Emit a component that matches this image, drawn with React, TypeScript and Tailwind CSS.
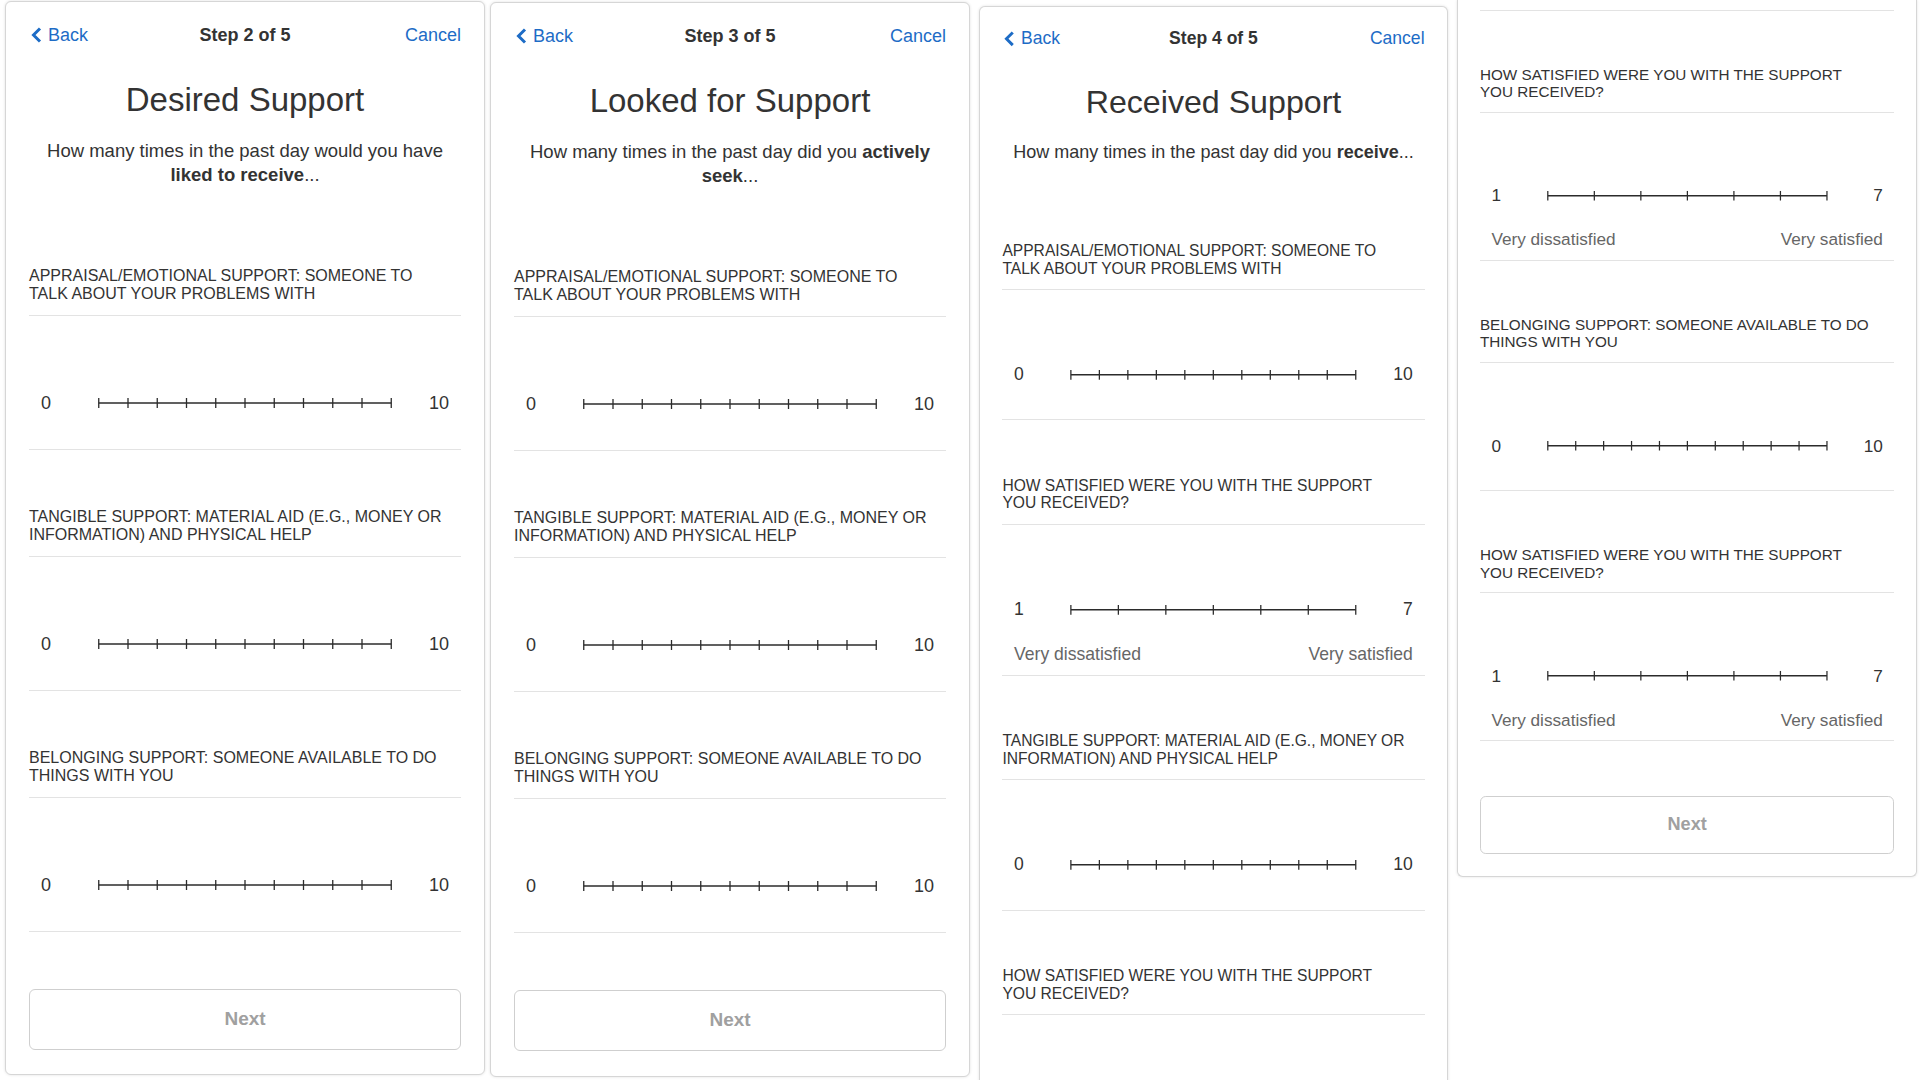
import React from "react";

const BLUE = "text-[#1d6cc6]";

function Chevron() {
  return (
    <svg width="11" height="16" viewBox="0 0 11 16" className="shrink-0 ml-[2px]">
      <polyline points="9,1.5 2.5,8 9,14.5" fill="none" stroke="#1d6cc6" strokeWidth="3" />
    </svg>
  );
}

function Ticks({ n }: { n: number }) {
  const w = 294;
  const xs = Array.from({ length: n }, (_, i) => 0.75 + (i * (w - 1.5)) / (n - 1));
  return (
    <svg width={w} height="12" viewBox={`0 0 ${w} 12`} className="shrink-0">
      <line x1="0.75" y1="6" x2={w - 0.75} y2="6" stroke="#2b2b2b" strokeWidth="1.5" />
      {xs.map((x, i) => (
        <line key={i} x1={x} y1="1" x2={x} y2="11" stroke="#2b2b2b" strokeWidth="1.3" />
      ))}
    </svg>
  );
}

function Header({ step }: { step: number }) {
  return (
    <div className="pt-[21px] grid grid-cols-3 items-center h-[45px] text-[18px] leading-[24px]">
      <div className={`flex items-center gap-[6px] ${BLUE}`}>
        <Chevron />
        <span>Back</span>
      </div>
      <div className="text-center font-bold text-[#333] whitespace-nowrap">Step {step} of 5</div>
      <div className={`text-right ${BLUE}`}>Cancel</div>
    </div>
  );
}

function Title({ children }: { children: React.ReactNode }) {
  return <h1 className="mt-[33px] text-center text-[33px] leading-[40px] text-[#333] font-normal">{children}</h1>;
}

function Subtitle({ children }: { children: React.ReactNode }) {
  return <p className="mt-[19px] mb-[22px] text-center text-[18.5px] leading-[24px] text-[#333]">{children}</p>;
}

function Label({ lines }: { lines: string[] }) {
  return (
    <div className="pt-[58px] pb-[12px] border-b border-[#e3e3e3] text-[16px] leading-[18px] text-[#333]">
      {lines.map((l, i) => (
        <div key={i} className="whitespace-nowrap">
          {l}
        </div>
      ))}
    </div>
  );
}

function Slider10() {
  return (
    <div className="pt-[75px] pb-[34px] border-b border-[#e3e3e3]">
      <div className="flex items-center h-[24px] px-3 text-[18px] leading-[24px] text-[#333]">
        <span className="flex-1">0</span>
        <Ticks n={11} />
        <span className="flex-1 text-right">10</span>
      </div>
    </div>
  );
}

function Slider7() {
  return (
    <div className="pt-[75px] pb-[9px] border-b border-[#e3e3e3]">
      <div className="flex items-center h-[24px] px-3 text-[18px] leading-[24px] text-[#333]">
        <span className="flex-1">1</span>
        <Ticks n={7} />
        <span className="flex-1 text-right">7</span>
      </div>
      <div className="mt-[22px] flex justify-between h-[24px] px-3 text-[18px] leading-[24px] text-[#666]">
        <span>Very dissatisfied</span>
        <span>Very satisfied</span>
      </div>
    </div>
  );
}

function NextButton() {
  return (
    <div className="mt-[57px] h-[61px] rounded-[6px] border border-[#cfcfcf] flex items-center justify-center text-[19px] font-bold text-[#a0a0a0]">
      Next
    </div>
  );
}

const APPRAISAL = ["APPRAISAL/EMOTIONAL SUPPORT: SOMEONE TO", "TALK ABOUT YOUR PROBLEMS WITH"];
const TANGIBLE = ["TANGIBLE SUPPORT: MATERIAL AID (E.G., MONEY OR", "INFORMATION) AND PHYSICAL HELP"];
const BELONGING = ["BELONGING SUPPORT: SOMEONE AVAILABLE TO DO", "THINGS WITH YOU"];
const SATISFIED = ["HOW SATISFIED WERE YOU WITH THE SUPPORT", "YOU RECEIVED?"];

export default function App() {
  return (
    <div className="h-[1080px] w-[1920px] overflow-hidden bg-white flex items-start font-['Liberation_Sans',Arial,sans-serif]">
      {/* Panel 1 */}
      <div className="ml-[5px] mt-[1px]">
        <div className="w-[480px] bg-white border border-[#d6d6d6] rounded-[6px] shadow-[0_0_3px_rgba(0,0,0,0.12)] px-[23px] pb-[24px]">
          <Header step={2} />
          <Title>Desired Support</Title>
          <Subtitle>
            How many times in the past day would you have
            <br />
            <b className="font-bold">liked to receive</b>...
          </Subtitle>
          <Label lines={APPRAISAL} />
          <Slider10 />
          <Label lines={TANGIBLE} />
          <Slider10 />
          <Label lines={BELONGING} />
          <Slider10 />
          <NextButton />
        </div>
      </div>

      {/* Panel 2 */}
      <div className="ml-[5px] mt-[2px]">
        <div className="w-[480px] bg-white border border-[#d6d6d6] rounded-[6px] shadow-[0_0_3px_rgba(0,0,0,0.12)] px-[23px] pb-[25px]">
          <Header step={3} />
          <Title>Looked for Support</Title>
          <Subtitle>
            How many times in the past day did you <b className="font-bold">actively</b>
            <br />
            <b className="font-bold">seek</b>...
          </Subtitle>
          <Label lines={APPRAISAL} />
          <Slider10 />
          <Label lines={TANGIBLE} />
          <Slider10 />
          <Label lines={BELONGING} />
          <Slider10 />
          <NextButton />
        </div>
      </div>

      {/* Panel 3 */}
      <div className="ml-[9px] mt-[6px]">
        <div className="[zoom:0.975] w-[481px] bg-white border-x border-t border-[#d6d6d6] rounded-t-[6px] shadow-[0_0_3px_rgba(0,0,0,0.12)] px-[23px]">
          <Header step={4} />
          <Title>Received Support</Title>
          <Subtitle>
            How many times in the past day did you <b className="font-bold">receive</b>...
          </Subtitle>
          <Label lines={APPRAISAL} />
          <Slider10 />
          <Label lines={SATISFIED} />
          <Slider7 />
          <Label lines={TANGIBLE} />
          <Slider10 />
          <Label lines={SATISFIED} />
          <div className="h-[120px]" />
        </div>
      </div>

      {/* Panel 4 (scrolled) */}
      <div className="ml-[9px]">
        <div className="[zoom:0.955] w-[482px] bg-white border-x border-b border-[#d6d6d6] rounded-b-[6px] shadow-[0_0_3px_rgba(0,0,0,0.12)] px-[23px] pb-[23px]">
          <div className="h-[11px] border-b border-[#e3e3e3]" />
          <Label lines={SATISFIED} />
          <Slider7 />
          <Label lines={BELONGING} />
          <Slider10 />
          <Label lines={SATISFIED} />
          <Slider7 />
          <NextButton />
        </div>
      </div>
    </div>
  );
}
